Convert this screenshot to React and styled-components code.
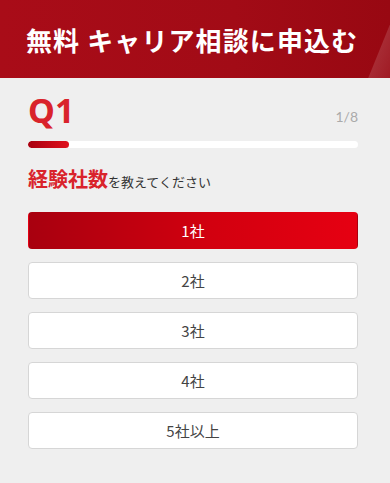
import styled, { createGlobalStyle } from "styled-components";

const GlobalStyle = createGlobalStyle`
    html, body {
        margin: 0;
        padding: 0;
        background: #efefef;
        font-family: "Noto Sans CJK JP", "Noto Sans", sans-serif;
    }
`

const Header = styled.header`
    position: relative;
    overflow: hidden;
    height: 78px;
    display: flex;
    align-items: center;
    padding: 0 26px;
    background: linear-gradient(90deg, #a90c18 0%, #a20b16 60%, #980812 100%);
    &::after {
        content: "";
        position: absolute;
        right: -24px;
        top: 0;
        width: 30px;
        height: 100%;
        background: linear-gradient(90deg, rgba(255,255,255,0.14), rgba(255,255,255,0.05));
        transform: skewX(-22deg);
    }
`

const Title = styled.h1`
    margin: 0;
    color: #fff;
    font-size: 26px;
    font-weight: 700;
    letter-spacing: 1.1px;
    white-space: nowrap;
`

const Body = styled.main`
    padding: 14px 32px 30px 28px;
`

const QuestionHead = styled.div`
    display: flex;
    justify-content: space-between;
    align-items: flex-end;
`

const QNum = styled.div`
    color: #d9232b;
    font-size: 34px;
    font-weight: 700;
    line-height: 1.1;
    font-family: "Noto Sans", sans-serif;
`

const Count = styled.div`
    color: #aaa;
    font-size: 14px;
    margin-bottom: 4px;
    font-family: "Lato", sans-serif;
`

const Track = styled.div`
    margin-top: 12px;
    height: 7px;
    border-radius: 4px;
    background: #fff;
    overflow: hidden;
`

const Fill = styled.div`
    height: 100%;
    border-radius: 4px;
    background: linear-gradient(90deg, #a8000f, #e0101c);
`

const Question = styled.p`
    margin: 16px 0 0;
    color: #333;
    font-size: 13px;
    line-height: 30px;
    strong {
        color: #d9232b;
        font-size: 20px;
        font-weight: 700;
    }
`

const Options = styled.div`
    display: flex;
    flex-direction: column;
    gap: 13px;
    margin-top: 15px;
`

const Option = styled.button`
    height: 37px;
    width: 100%;
    border-radius: 4px;
    border: 1px solid ${p => p.$active ? "transparent" : "#d6d6d6"};
    background: ${p => p.$active ? "linear-gradient(90deg, #a8000f 0%, #d2000f 55%, #e60012 100%)" : "#fff"};
    color: ${p => p.$active ? "#fff" : "#444"};
    font-family: "Noto Sans CJK JP", sans-serif;
    font-size: 15px;
    cursor: pointer;
`

const choices = ["1社", "2社", "3社", "4社", "5社以上"];

export default function App() {
    const step = 1;
    const total = 8;
    return (
        <>
            <GlobalStyle />
            <Header>
                <Title>無料 キャリア相談に申込む</Title>
            </Header>
            <Body>
                <QuestionHead>
                    <QNum>Q1</QNum>
                    <Count>{step}/{total}</Count>
                </QuestionHead>
                <Track>
                    <Fill style={{ width: `${(step / total) * 100}%` }} />
                </Track>
                <Question><strong>経験社数</strong>を教えてください</Question>
                <Options>
                    {choices.map((c, i) => (
                        <Option key={c} $active={i === 0}>{c}</Option>
                    ))}
                </Options>
            </Body>
        </>
    )
}
